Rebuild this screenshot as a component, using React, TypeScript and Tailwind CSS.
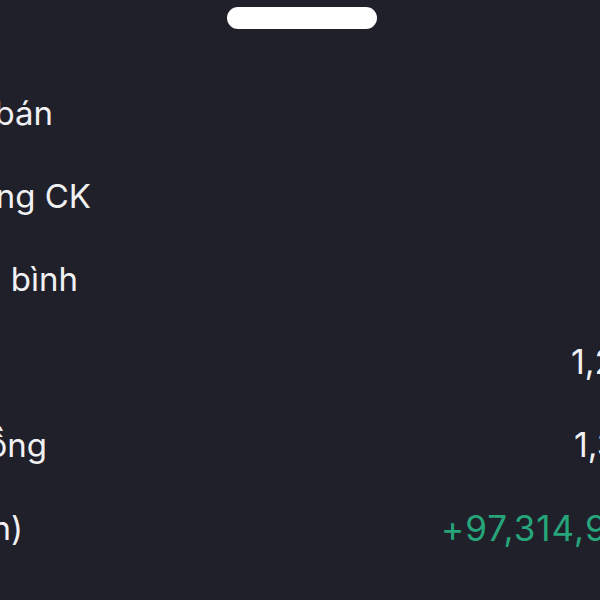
import React from "react";

type Row = {
  label: string;
  labelEnd: string;
  value?: string;
  valueGap: string;
  green?: boolean;
};

const rows: Row[] = [
  { label: "Giá mua/bán", labelEnd: "w-[53px]", valueGap: "ml-[600px]" },
  { label: "Khối lượng CK", labelEnd: "w-[91px]", valueGap: "ml-[600px]" },
  { label: "Giá trung bình", labelEnd: "w-[78px]", valueGap: "ml-[600px]" },
  { label: "Giá vốn", labelEnd: "w-0", value: "1,234,500", valueGap: "ml-[571px]" },
  { label: "Giá trị hiện tại đồng", labelEnd: "w-[47px]", value: "1,331,815", valueGap: "ml-[527px]" },
  {
    label: "Lãi/lỗ (tạm tính)",
    labelEnd: "w-[23px]",
    value: "+97,314,900",
    valueGap: "ml-[418px]",
    green: true,
  },
];

function DetailRow({ row }: { row: Row }) {
  return (
    <div className="flex items-center h-[83px]">
      <div className={`${row.labelEnd} shrink-0 flex justify-end`}>
        <span className="shrink-0 whitespace-nowrap text-[33px] leading-[40px] text-[#f1f1f3] font-['Inter',sans-serif]">
          {row.label}
        </span>
      </div>
      {row.value && (
        <span
          className={`${row.valueGap} shrink-0 whitespace-nowrap leading-[40px] proportional-nums font-['Inter',sans-serif] ${
            row.green
              ? "text-[35px] tracking-[1px] text-[#26a57a]"
              : "text-[34px] text-[#f1f1f3]"
          }`}
        >
          {row.value}
        </span>
      )}
    </div>
  );
}

export default function App() {
  return (
    <div className="w-[600px] h-[600px] overflow-hidden bg-[#20202a]">
      <div className="flex justify-center pt-[7px] pl-[4px]">
        <div className="w-[150px] h-[22px] rounded-full bg-white" />
      </div>
      <div className="mt-[42px]">
        {rows.map((row) => (
          <DetailRow key={row.label} row={row} />
        ))}
      </div>
    </div>
  );
}
